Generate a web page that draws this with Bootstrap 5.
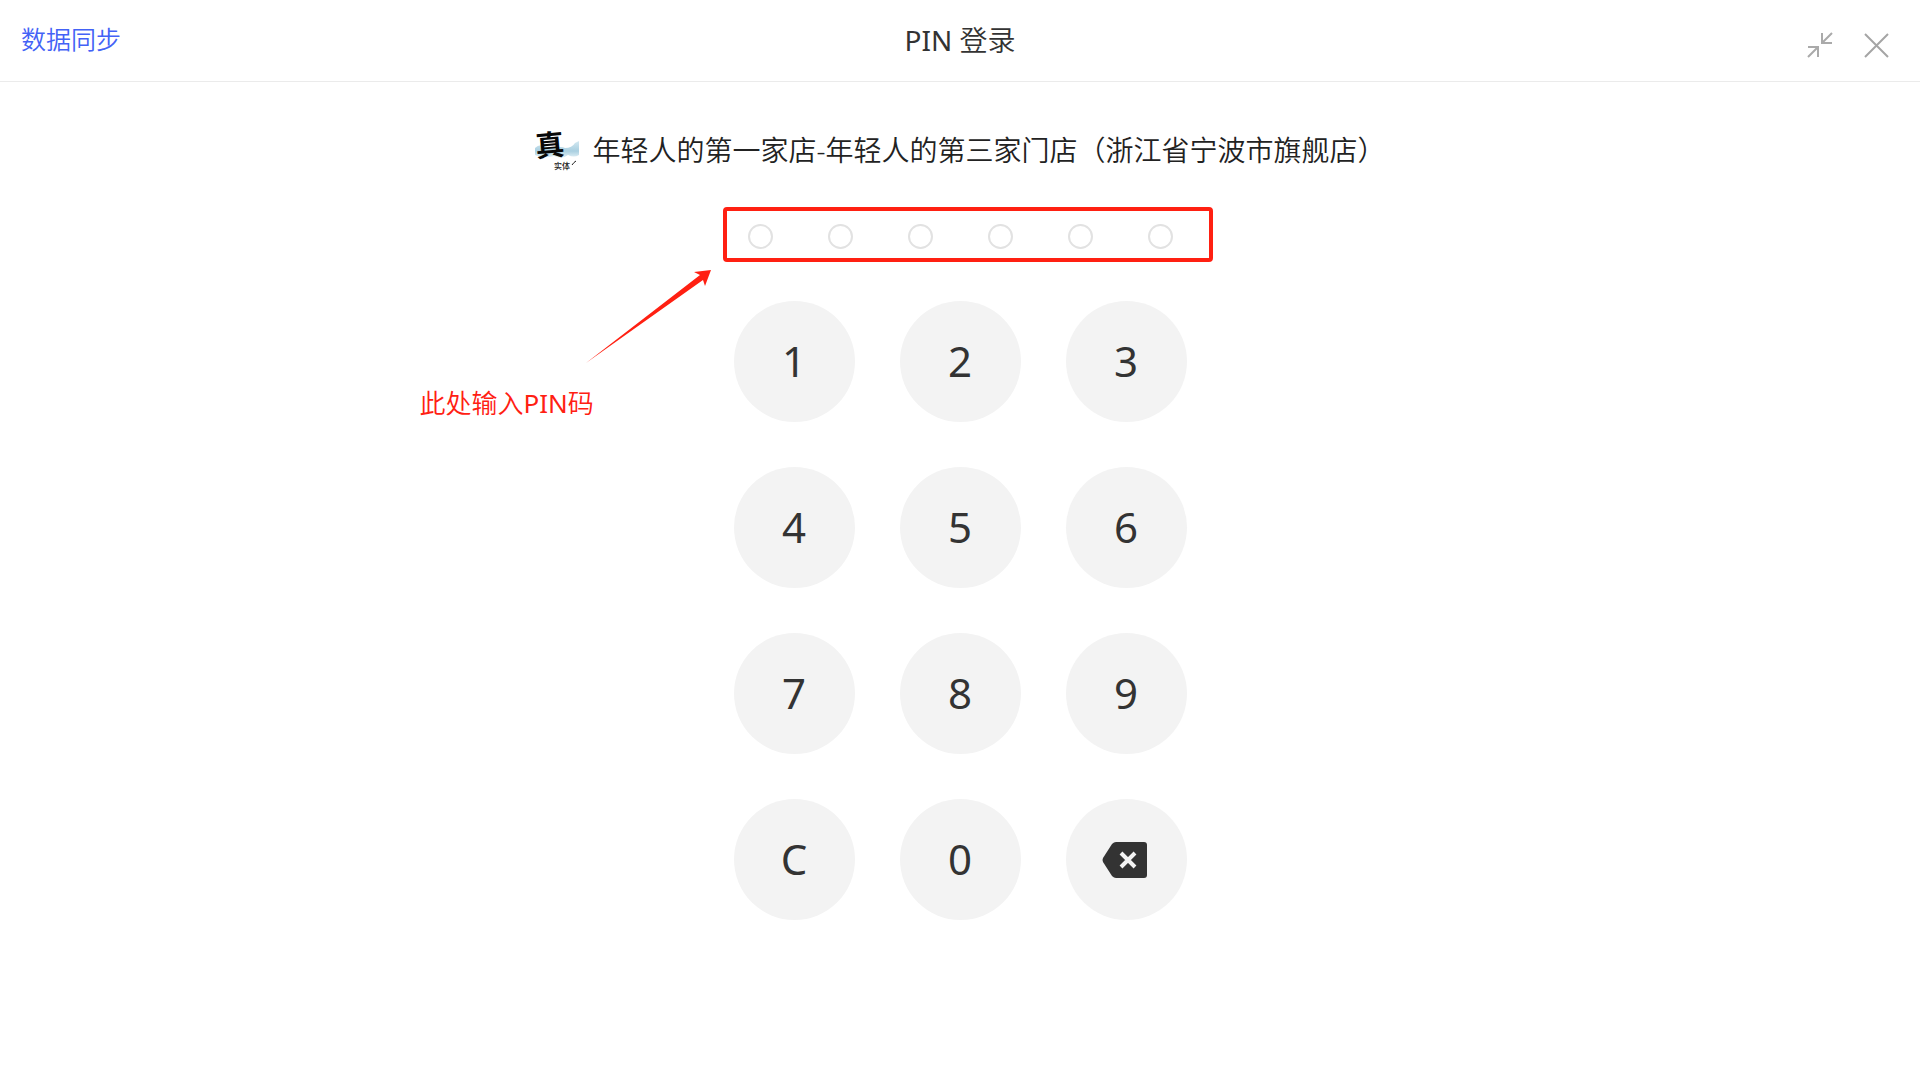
<!DOCTYPE html>
<html lang="zh-CN">
<head>
<meta charset="utf-8">
<meta name="viewport" content="width=device-width, initial-scale=1">
<title>PIN 登录</title>
<link href="https://cdn.jsdelivr.net/npm/bootstrap@5.3.0/dist/css/bootstrap.min.css" rel="stylesheet">
<style>
  body { font-family: "Noto Sans", "Noto Sans CJK SC", sans-serif; color: #333; background: #fff; }
  .top-bar { display: grid; grid-template-columns: 1fr auto 1fr; height: 82px; padding: 0 21px; border-bottom: 1px solid #ebebeb; }
  .sync-link { font-size: 25px; line-height: 32px; color: #4362f6; font-weight: 350; }
  .sync-area { padding-bottom: 4px; }
  .page-title { font-size: 28px; line-height: 36px; font-weight: 400; padding-bottom: 2px; }
  .cjk-light { font-weight: 350; }
  .latin { font-weight: 400; }
  .win-tools { gap: 30px; padding: 8px 10px 0 0; }
  .win-tools svg { display: block; }
  .store-line { margin-top: 44px; gap: 12px; }
  .store-name { font-size: 28px; line-height: 48px; font-weight: 350; color: #222; }
  .pin-dots { margin-top: 50px; gap: 55px; }
  .pin-dot { width: 25px; height: 25px; border: 2px solid #e2e2e2; }
  .note-frame { left: -25px; top: -17px; width: 490px; height: 55px; border: 4px solid #ff2012; border-radius: 4px; pointer-events: none; }
  .note-arrow { left: -163px; top: 45px; }
  .note-text { left: -328px; top: 159px; font-size: 26px; line-height: 40px; color: #ff2012; font-weight: 350; }
  .keypad { display: grid; grid-template-columns: repeat(3, 121px); gap: 45px; margin-top: 52px; }
  .pin-key { width: 121px; height: 121px; padding: 0 0 2px; border: 0; background: #f3f3f3; color: #333; font-size: 42px; line-height: 56px; }
  .pin-key:hover { background: #e8e8e8; }
</style>
<script src="https://cdn.jsdelivr.net/npm/bootstrap@5.3.0/dist/js/bootstrap.bundle.min.js"></script>
</head>
<body>
<header class="top-bar align-items-center">
  <div class="sync-area"><a class="sync-link text-decoration-none" href="#sync">数据同步</a></div>
  <h1 class="page-title mb-0 text-nowrap">PIN <span class="cjk-light">登录</span></h1>
  <div class="win-tools d-flex justify-content-end">
    <button type="button" class="btn p-0 border-0" aria-label="缩小窗口">
      <svg width="26" height="26" viewBox="0 0 26 26" fill="none" stroke="#aaa" stroke-width="2"><path d="M15 1v10h10M15 11L25 1M1 15h10v10M11 15L1 25"/></svg>
    </button>
    <button type="button" class="btn p-0 border-0" aria-label="关闭">
      <svg width="26" height="26" viewBox="0 0 26 26" fill="none" stroke="#a5a5a5" stroke-width="2"><path d="M2 2l23 23M25 2L2 25"/></svg>
    </button>
  </div>
</header>

<main class="d-flex flex-column align-items-center">
  <div class="store-line d-flex align-items-center">
    <svg width="46" height="46" viewBox="0 0 46 46" overflow="visible" role="img" aria-label="店铺标志">
      <defs><linearGradient id="wash" x1="0" y1="0" x2="0" y2="1"><stop offset="0" stop-color="#d3e8f1"/><stop offset=".6" stop-color="#a9cfe0"/><stop offset="1" stop-color="#e3f1f7"/></linearGradient></defs>
      <path fill="url(#wash)" d="M1 21Q5 17 10 19T21 21Q27 19 31 21Q38 21 41 16L45 14V28Q40 31 34 28Q28 33 20 29Q9 32 1 28Z"/>
      <text x="1" y="29" font-size="29" font-weight="700" fill="#080808" font-family="Noto Sans CJK SC, sans-serif" transform="rotate(-5 14 16)">真</text>
      <text x="20" y="42" font-size="8" font-weight="500" fill="#222" font-family="Noto Sans CJK SC, sans-serif">实体</text>
      <path d="M38 38Q40 35 42 34" stroke="#222" fill="none"/>
    </svg>
    <div class="store-name">年轻人的第一家店-年轻人的第三家门店（浙江省宁波市旗舰店）</div>
  </div>

  <div class="pin-dots position-relative d-flex" role="group" aria-label="PIN 码">
    <span class="pin-dot rounded-circle"></span>
    <span class="pin-dot rounded-circle"></span>
    <span class="pin-dot rounded-circle"></span>
    <span class="pin-dot rounded-circle"></span>
    <span class="pin-dot rounded-circle"></span>
    <span class="pin-dot rounded-circle"></span>
    <div class="note-frame position-absolute"></div>
    <svg class="note-arrow position-absolute" width="128" height="96" viewBox="0 0 128 96"><path fill="#ff2012" d="M1 94L115 6 109 3 126 1 120 17 118 11Z"/></svg>
    <div class="note-text position-absolute text-nowrap">此处输入<span class="latin">PIN</span>码</div>
  </div>

  <div class="keypad">
    <button type="button" class="pin-key btn rounded-circle">1</button>
    <button type="button" class="pin-key btn rounded-circle">2</button>
    <button type="button" class="pin-key btn rounded-circle">3</button>
    <button type="button" class="pin-key btn rounded-circle">4</button>
    <button type="button" class="pin-key btn rounded-circle">5</button>
    <button type="button" class="pin-key btn rounded-circle">6</button>
    <button type="button" class="pin-key btn rounded-circle">7</button>
    <button type="button" class="pin-key btn rounded-circle">8</button>
    <button type="button" class="pin-key btn rounded-circle">9</button>
    <button type="button" class="pin-key btn rounded-circle">C</button>
    <button type="button" class="pin-key btn rounded-circle">0</button>
    <button type="button" class="pin-key btn rounded-circle pb-0 d-flex align-items-center justify-content-center" aria-label="删除">
      <svg width="48" height="36" viewBox="0 0 48 36"><path fill="#333" d="M14 0H42Q45 0 45 3V33Q45 36 42 36H14Q12 36 10 34L1 20Q0 18 1 16L10 2Q12 0 14 0Z"/><path d="M19 11L33 25M33 11L19 25" stroke="#f3f3f3" stroke-width="4"/></svg>
    </button>
  </div>
</main>
</body>
</html>
